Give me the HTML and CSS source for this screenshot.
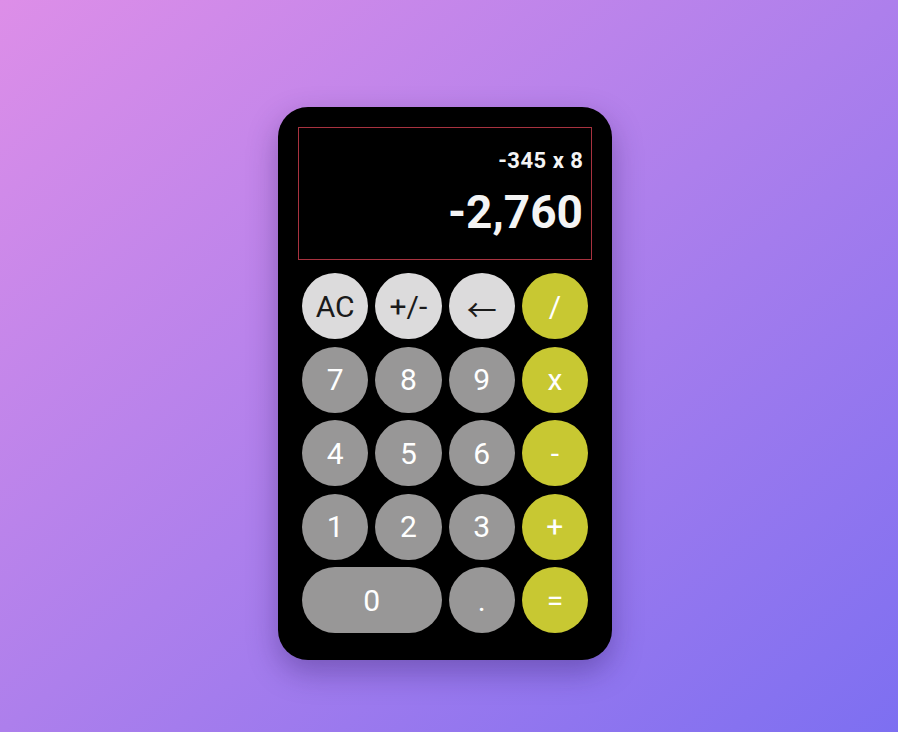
FILE: index.html
```html
<!DOCTYPE html>
<html lang="en">
<head>
<meta charset="utf-8">
<title>Calculator</title>
<link rel="stylesheet" href="styles.css">
</head>
<body>
  <div class="calculator">
    <div class="display">
      <div class="previous">-345 x 8</div>
      <div class="current">-2,760</div>
    </div>
    <div class="keys">
      <button class="key light">AC</button>
      <button class="key light">+/-</button>
      <button class="key light arrow">←</button>
      <button class="key op">/</button>
      <button class="key num">7</button>
      <button class="key num">8</button>
      <button class="key num">9</button>
      <button class="key op">x</button>
      <button class="key num">4</button>
      <button class="key num">5</button>
      <button class="key num">6</button>
      <button class="key op">-</button>
      <button class="key num">1</button>
      <button class="key num">2</button>
      <button class="key num">3</button>
      <button class="key op">+</button>
      <button class="key num zero">0</button>
      <button class="key num">.</button>
      <button class="key op">=</button>
    </div>
  </div>
</body>
</html>
```
FILE: styles.css
```css
* { box-sizing: border-box; }
html, body { height: 100%; }
body {
  margin: 0;
  padding: 107px 8px 0 0;
  font-family: Roboto, "Liberation Sans", sans-serif;
  background: linear-gradient(to bottom right, #dd8ee8 0%, #ad7fec 50%, #7d6ff1 100%);
  display: flex;
  justify-content: center;
  align-items: flex-start;
}
.calculator {
  width: 334px;
  height: 553px;
  background: #000;
  border-radius: 30px;
  padding: 20px 20px 27px;
  box-shadow: 0 12px 30px rgba(40, 20, 90, 0.35);
  display: flex;
  flex-direction: column;
  gap: 13px;
}
.display {
  height: 133px;
  border: 1px solid #a8323f;
  padding: 18px 8px 20px;
  display: flex;
  flex-direction: column;
  align-items: flex-end;
  justify-content: flex-end;
  gap: 12px;
  color: #f4f4f4;
  font-weight: 700;
}
.previous {
  font-size: 22px;
  letter-spacing: 0.5px;
  margin-right: -0.5px;
}
.current { font-size: 46px; }
.keys {
  padding: 0 4px;
  display: grid;
  grid-template-columns: repeat(4, 1fr);
  grid-template-rows: repeat(5, 66px);
  column-gap: 7px;
  row-gap: 7.5px;
}
.key {
  border: none;
  border-radius: 999px;
  font-family: Roboto, "Liberation Sans", sans-serif;
  font-size: 30px;
  font-weight: 400;
  color: #fff;
  padding: 0;
  display: flex;
  align-items: center;
  justify-content: center;
}
.arrow {
  font-family: "Noto Sans CJK JP", "DejaVu Sans", sans-serif;
  padding-top: 4px;
}
.light { background: #dcdbdc; color: #1a1a1a; }
.num { background: #989797; }
.op { background: #c8c832; }
.zero { grid-column: span 2; }
```
